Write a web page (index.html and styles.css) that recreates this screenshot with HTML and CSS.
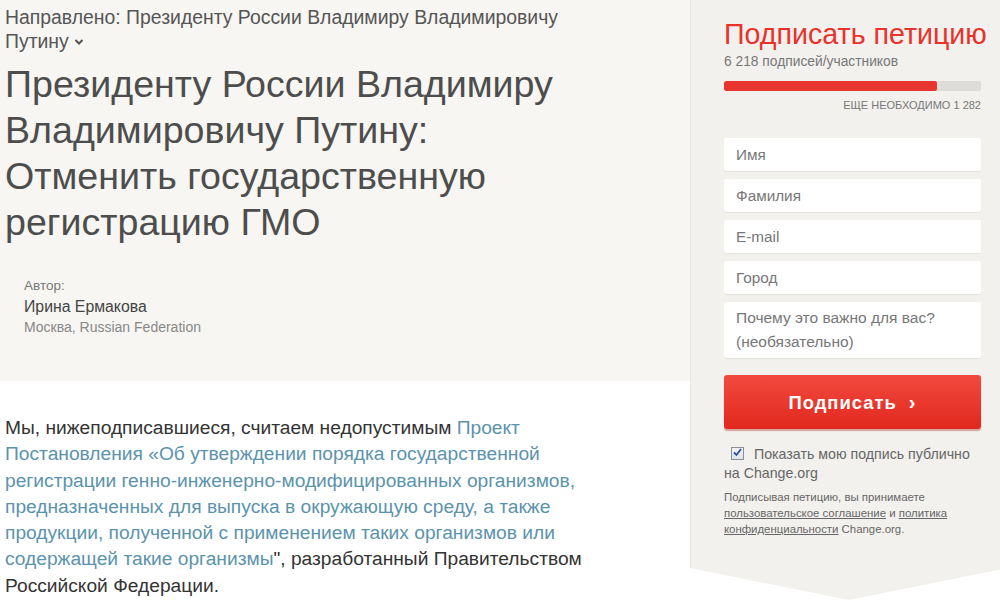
FILE: index.html
```html
<!DOCTYPE html>
<html lang="ru">
<head>
<meta charset="utf-8">
<title>Петиция</title>
<link rel="stylesheet" href="styles.css">
</head>
<body>
<div class="page">
  <main class="main">
    <section class="hero">
      <div class="target">Направлено: Президенту России Владимиру Владимировичу Путину <svg class="caret" width="10" height="8" viewBox="0 0 10 8"><path d="M1.5 2 L5 5.5 L8.5 2" fill="none" stroke="#555" stroke-width="2"/></svg></div>
      <h1 class="title">Президенту России Владимиру Владимировичу Путину: Отменить государственную регистрацию ГМО</h1>
      <div class="author">
        <div class="author-label">Автор:</div>
        <div class="author-name">Ирина Ермакова</div>
        <div class="author-place">Москва, Russian Federation</div>
      </div>
    </section>
    <section class="body">
      <p class="text">Мы, нижеподписавшиеся, считаем недопустимым <a class="link" href="#">Проект Постановления «Об утверждении порядка государственной регистрации генно-инженерно-модифицированных организмов, предназначенных для выпуска в окружающую среду, а также продукции, полученной с применением таких организмов или содержащей такие организмы</a>", разработанный Правительством Российской Федерации.</p>
    </section>
  </main>
  <aside class="sidebar">
    <h2 class="sign-title">Подписать петицию</h2>
    <div class="count">6 218 подписей/участников</div>
    <div class="progress"><div class="progress-fill" style="width:83%"></div></div>
    <div class="needed">ЕЩЕ НЕОБХОДИМО 1 282</div>
    <form class="form">
      <div class="field">Имя</div>
      <div class="field">Фамилия</div>
      <div class="field">E-mail</div>
      <div class="field">Город</div>
      <div class="field area">Почему это важно для вас? (необязательно)</div>
      <button type="button" class="btn">Подписать <span class="chev">›</span></button>
      <label class="public"><span class="check"><svg width="9" height="9" viewBox="0 0 9 9"><path d="M1 4.5 L3.5 7 L8 1" fill="none" stroke="#2d4f9e" stroke-width="1.8"/></svg></span>Показать мою подпись публично на Change.org</label>
      <p class="terms">Подписывая петицию, вы принимаете <a href="#">пользовательское соглашение</a> и <a href="#">политика конфиденциальности</a> Change.org.</p>
    </form>
  </aside>
</div>
</body>
</html>
```
FILE: styles.css
```css
html, body {
  margin: 0;
  padding: 0;
  background: #fff;
}
body {
  font-family: "Liberation Sans", Arial, sans-serif;
  color: #333;
  overflow: hidden;
  width: 1000px;
  height: 604px;
}
.page {
  display: flex;
  align-items: flex-start;
  width: 1000px;
}
.main {
  width: 690px;
  flex: none;
}
.hero {
  background: #f7f6f3;
  height: 381px;
  padding: 5px 0 0 5px;
  box-sizing: border-box;
}
.target {
  font-size: 19.4px;
  line-height: 24px;
  color: #555;
  width: 590px;
}
.caret {
  vertical-align: 2px;
}
.title {
  margin: 8px 0 0;
  font-weight: normal;
  font-size: 37.6px;
  line-height: 46px;
  color: #4d4d4d;
  width: 600px;
}
.author {
  margin: 30px 0 0 19px;
}
.author-label {
  font-size: 13.5px;
  line-height: 21px;
  color: #7a7a7a;
}
.author-name {
  font-size: 15.8px;
  line-height: 21px;
  color: #444;
}
.author-place {
  font-size: 14px;
  line-height: 21px;
  color: #888;
}
.body {
  padding: 34px 0 0 5px;
}
.text {
  margin: 0;
  font-size: 19.2px;
  line-height: 26.3px;
  color: #333;
  width: 600px;
}
.link {
  color: #5b93ad;
  text-decoration: none;
}
.sidebar {
  width: 318px;
  flex: none;
  height: 600px;
  background: #f2f1ed;
  border-left: 1px solid #e9e7e2;
  box-sizing: border-box;
  padding: 18px 0 0 33px;
  clip-path: polygon(0 0, 100% 0, 100% 568px, 50% 600px, 0 568px);
}
.sign-title {
  margin: 0;
  font-weight: normal;
  font-size: 28.6px;
  line-height: 32px;
  color: #e8322b;
}
.count {
  margin-top: 4px;
  font-size: 13.8px;
  line-height: 16px;
  color: #777;
}
.progress {
  margin-top: 11px;
  width: 257px;
  height: 10px;
  background: #dedcd8;
  border-radius: 2px;
  overflow: hidden;
}
.progress-fill {
  height: 100%;
  background: #e8352e;
  border-radius: 2px;
}
.needed {
  width: 257px;
  text-align: right;
  margin-top: 7px;
  font-size: 11px;
  line-height: 14px;
  color: #777;
}
.form {
  margin-top: 26px;
  width: 257px;
  display: flex;
  flex-direction: column;
  gap: 8px;
}
.field {
  height: 33px;
  background: #fff;
  box-sizing: border-box;
  padding: 0 12px;
  font-size: 15.3px;
  line-height: 33px;
  color: #777;
  border-radius: 2px;
  box-shadow: 0 1px 1px rgba(0,0,0,0.06);
}
.field.area {
  height: 56px;
  line-height: 24px;
  padding-top: 4px;
  font-size: 15.5px;
}
.btn {
  margin-top: 9px;
  height: 54px;
  border: none;
  border-radius: 3px;
  background: linear-gradient(#f24a3f, #e1281e);
  box-shadow: 0 2px 1px rgba(150,20,10,0.35);
  color: #fff;
  font-family: inherit;
  font-size: 18.4px;
  font-weight: bold;
  letter-spacing: 1px;
  cursor: pointer;
}
.chev {
  margin-left: 6px;
  font-size: 20px;
}
.public {
  margin-top: 8px;
  font-size: 14.2px;
  line-height: 19px;
  color: #666;
}
.check {
  display: inline-block;
  width: 11px;
  height: 11px;
  border: 1px solid #8a8f99;
  background: linear-gradient(#f0f2f6, #dfe3ea);
  vertical-align: -1px;
  margin: 0 10px 0 7px;
  position: relative;
}
.check svg {
  position: absolute;
  left: 1px;
  top: 0;
}
.terms {
  margin: -2px 0 0;
  font-size: 11.4px;
  line-height: 16px;
  color: #666;
}
.terms a {
  color: #666;
}
```
